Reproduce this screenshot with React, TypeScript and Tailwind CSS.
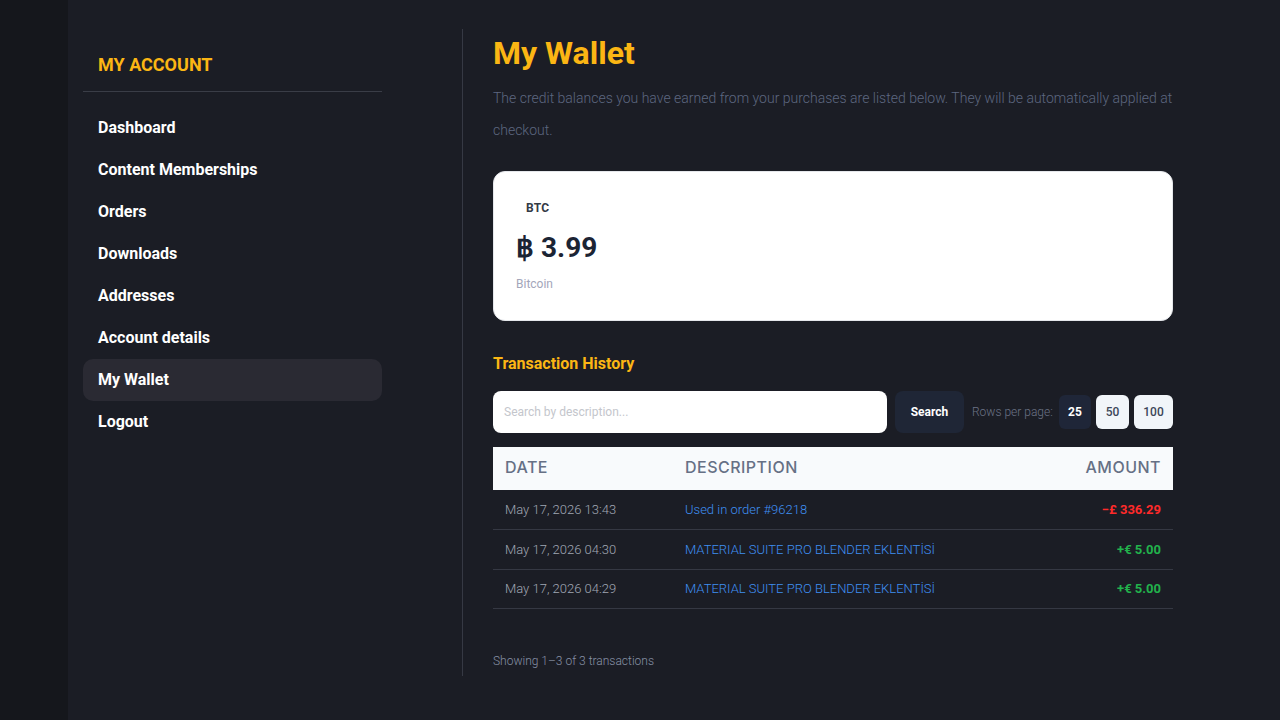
import React from "react";

const navItems = [
  "Dashboard",
  "Content Memberships",
  "Orders",
  "Downloads",
  "Addresses",
  "Account details",
  "My Wallet",
  "Logout",
];

const transactions = [
  { date: "May 17, 2026 13:43", desc: "Used in order #96218", amount: "−£ 336.29", negative: true },
  { date: "May 17, 2026 04:30", desc: "MATERIAL SUITE PRO BLENDER EKLENTİSİ", amount: "+€ 5.00", negative: false },
  { date: "May 17, 2026 04:29", desc: "MATERIAL SUITE PRO BLENDER EKLENTİSİ", amount: "+€ 5.00", negative: false },
];

export default function App() {
  return (
    <div
      className="flex min-h-screen bg-[#15171c]"
      style={{ fontFamily: "Roboto, 'Liberation Sans', sans-serif" }}
    >
      <div className="w-[68px] shrink-0" />
      <div className="flex flex-1 bg-[#1b1d25] pt-[29px]">
        {/* sidebar */}
        <aside className="w-[394px] shrink-0 pl-[15px] pt-[22px]">
          <div className="w-[299px]">
            <h2 className="px-[15px] text-[18px] leading-[28px] font-bold text-[#fbb614]">
              MY ACCOUNT
            </h2>
            <div className="mt-[12px] h-px bg-[#3a3d47]" />
            <nav className="mt-[15px] flex flex-col">
              {navItems.map((item) => (
                <a
                  key={item}
                  href="#"
                  className={
                    "flex h-[42px] items-center rounded-[10px] px-[15px] text-[16px] font-bold text-white " +
                    (item === "My Wallet" ? "bg-[#2a2a33]" : "")
                  }
                >
                  {item}
                </a>
              ))}
            </nav>
          </div>
        </aside>

        {/* main */}
        <main className="mb-[44px] w-[711px] border-l border-[#363944] pl-[30px] pt-[6px] pb-[3px]">
          <h1 className="text-[32px] leading-[36px] font-bold text-[#fbb614]">My Wallet</h1>
          <p className="mt-[11px] text-[14px] leading-[32px] font-light text-[#5d6780]">
            The credit balances you have earned from your purchases are listed below. They will be automatically applied at checkout.
          </p>

          <div className="mt-[25px] h-[150px] rounded-[12px] border border-[#e5e7eb] bg-white px-[22px] pt-[23px]">
            <span className="inline-block px-[10px] py-[4px] text-[12px] leading-[16px] font-bold tracking-wide text-[#333a45]">
              BTC
            </span>
            <div className="mt-[12px] text-[28px] leading-[32px] font-bold text-[#1b2434]">฿ 3.99</div>
            <div className="mt-[12px] text-[12px] leading-[16px] text-[#a3a6ba]">Bitcoin</div>
          </div>

          <h3 className="mt-[31px] text-[16px] leading-[24px] font-bold text-[#fbb614]">Transaction History</h3>

          <div className="mt-[15px] flex items-center">
            <input
              type="text"
              placeholder="Search by description..."
              className="h-[42px] w-[394px] rounded-[8px] bg-white px-[11px] text-[12px] text-[#333] outline-none placeholder:text-[#c4c6cc]"
            />
            <button className="ml-[8px] h-[42px] w-[69px] rounded-[8px] bg-[#1f2636] text-[12px] font-bold text-white">
              Search
            </button>
            <span className="ml-[8px] text-[12px] font-light text-[#6b7386]">Rows per page:</span>
            <div className="ml-auto flex gap-[5px]">
              <button className="h-[34px] w-[32px] rounded-[6px] bg-[#1f2638] text-[12px] font-bold text-white">25</button>
              <button className="h-[34px] w-[33px] rounded-[6px] bg-[#f1f5f9] text-[12px] font-medium text-[#3c4658]">50</button>
              <button className="h-[34px] w-[39px] rounded-[6px] bg-[#f1f5f9] text-[12px] font-medium text-[#3c4658]">100</button>
            </div>
          </div>

          <table className="mt-[14px] w-full border-collapse">
            <thead>
              <tr
                className="h-[43px] bg-[#f8fafc] text-[16px] text-[#667085]"
                style={{ fontFamily: "Inter, 'Noto Sans', sans-serif" }}
              >
                <th className="w-[180px] px-[12px] pb-[4px] text-left font-medium tracking-[0.03em]">DATE</th>
                <th className="px-[12px] pb-[4px] text-left font-medium tracking-[0.03em]">DESCRIPTION</th>
                <th className="px-[12px] pb-[4px] text-right font-medium tracking-[0.03em]">AMOUNT</th>
              </tr>
            </thead>
            <tbody>
              {transactions.map((t, i) => (
                <tr key={i} className="h-[39.5px] border-b border-[#353843] text-[13px]">
                  <td className="px-[12px] font-light text-[#a0a7b4]">{t.date}</td>
                  <td className="px-[12px] font-light text-[#3f8ff2]">{t.desc}</td>
                  <td
                    className={
                      "px-[12px] text-right font-bold " +
                      (t.negative ? "text-[#ff2a2a]" : "text-[#22b24c]")
                    }
                  >
                    {t.amount}
                  </td>
                </tr>
              ))}
            </tbody>
          </table>

          <p className="mt-[44px] text-[12px] leading-[16px] font-light text-[#8791a5]">Showing 1–3 of 3 transactions</p>
        </main>
      </div>
    </div>
  );
}
